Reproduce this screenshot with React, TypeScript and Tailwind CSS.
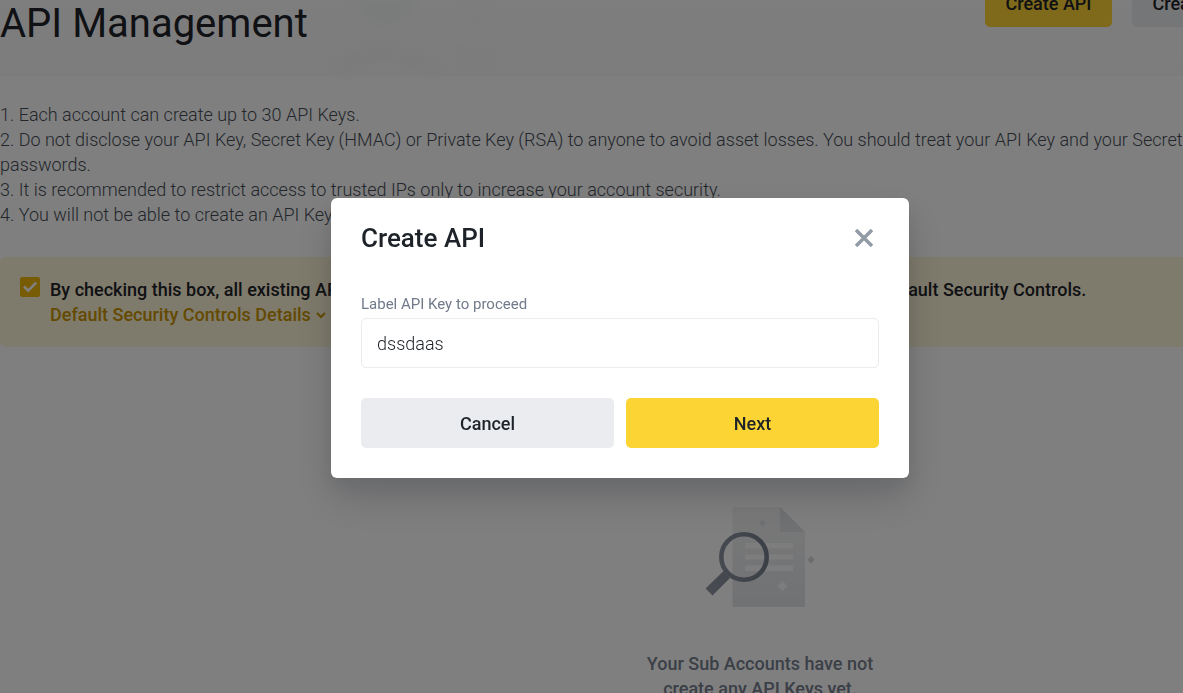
import { useState } from "react";

function ProfileBackdrop() {
  return (
    <svg
      aria-hidden="true"
      className="absolute left-[320px] top-0 h-[76px] w-[190px] blur-[4px]"
      viewBox="0 0 190 76"
      fill="none"
    >
      <ellipse cx="66" cy="2" rx="27" ry="24" fill="#f4f6f6" />
      <path d="M8 76c4-24 25-34 55-34s55 10 60 34z" fill="#f7f7f7" />
      <path d="M32 76c8-16 60-16 68 0z" fill="#f9f9f9" />
      <circle cx="153" cy="20" r="15" fill="#f9f9f9" />
      <ellipse cx="154" cy="58" rx="20" ry="9" fill="#f7f7f7" />
    </svg>
  );
}

function EmptyIllustration() {
  return (
    <svg
      aria-hidden="true"
      className="h-[104px] w-[112px]"
      viewBox="704 504 112 104"
      fill="none"
    >
      <defs>
        <linearGradient id="sheet" x1="768" y1="507" x2="768" y2="607" gradientUnits="userSpaceOnUse">
          <stop stopColor="#f3f3f3" />
          <stop offset="1" stopColor="#e1e4e8" />
        </linearGradient>
        <linearGradient id="lens" x1="706" y1="564" x2="769" y2="564" gradientUnits="userSpaceOnUse">
          <stop stopColor="#929aa5" />
          <stop offset="1" stopColor="#76808f" />
        </linearGradient>
      </defs>
      <path d="M732.5 507H780l25 25v75h-72.500z" fill="url(#sheet)" />
      <path d="M780 507l25 25h-25z" fill="#dfe2e6" />
      <path d="M745 543h48v5.500h-48zM745 554.500h48v5h-48zM745 565.500h48v5.500h-48z" fill="#fafafa" />
      <path d="M762.500 519.500l3.700 3.700-3.700 3.700-3.700-3.700z" fill="#dfe2e6" />
      <path d="M811 556l3.700 3.700-3.700 3.700-3.700-3.700z" fill="#d5d8dc" />
      <path d="M782.500 581l5 5-5 5-5-5z" fill="#fafafa" />
      <circle cx="744" cy="557" r="22.700" stroke="url(#lens)" strokeWidth="4.600" />
      <path d="M723.500 571l6.500 7-17.500 17.500-7-7z" fill="url(#lens)" />
    </svg>
  );
}

function Notes() {
  return (
    <div className="mt-[26px] text-[18px] leading-[25px] font-light text-[#474d57]">
      <p>1. Each account can create up to 30 API Keys.</p>
      <p>
        2. Do not disclose your API Key, Secret Key (HMAC) or Private Key (RSA) to anyone to avoid asset
        losses. You should treat your API Key and your Secret Key (HMAC) or Private Key (RSA) like
        <br />
        passwords.
      </p>
      <p>3. It is recommended to restrict access to trusted IPs only to increase your account security.</p>
      <p>4. You will not be able to create an API Key if KYC is not completed.</p>
    </div>
  );
}

function SecurityBanner() {
  const [checked, setChecked] = useState(true);
  return (
    <section className="mt-[30px] flex gap-[10px] rounded-md bg-[#fef6d8] p-5 text-[18px] leading-[25px] font-medium">
      <span className="relative h-5 w-5 shrink-0">
        <input
          id="default-controls"
          type="checkbox"
          checked={checked}
          onChange={(e) => setChecked(e.target.checked)}
          className="block h-5 w-5 appearance-none rounded-[2px] border border-[#f0b90b] checked:bg-[#f0b90b]"
        />
        {checked && (
          <svg aria-hidden="true" viewBox="0 0 20 20" className="pointer-events-none absolute inset-0 h-5 w-5">
            <path d="M4 9.500l4.200 4.200 8-8" fill="none" stroke="#fff" strokeWidth="2.600" />
          </svg>
        )}
      </span>
      <div>
        <label htmlFor="default-controls" className="block whitespace-nowrap text-[#1e2329]">
          By checking this box, all existing API Key(s) on your master account and subaccounts will be
          subject to Default Security Controls.
        </label>
        <button type="button" className="flex items-center gap-1 text-[#c99400]">
          Default Security Controls Details
          <svg aria-hidden="true" viewBox="0 0 12 12" className="h-3 w-3">
            <path d="M2 4l4 4 4-4" fill="none" stroke="currentColor" strokeWidth="2" />
          </svg>
        </button>
      </div>
    </section>
  );
}

function CreateDialog() {
  const [label, setLabel] = useState("dssdaas");
  return (
    <div className="fixed inset-0 flex items-start justify-center bg-black/50 pt-[198px] pl-[57px]">
      <div
        role="dialog"
        aria-modal="true"
        aria-labelledby="dialog-title"
        className="w-full max-w-[578px] rounded-md bg-white px-[30px] pt-5 pb-[30px] shadow-[0_0_1px_rgba(20,21,26,0.1),0_10px_20px_rgba(71,77,87,0.16),0_20px_40px_rgba(20,21,26,0.16)]"
      >
        <div className="flex h-10 items-center justify-between">
          <h2 id="dialog-title" className="text-[26px] leading-10 font-medium text-[#1e2329]">
            Create API
          </h2>
          <button type="button" aria-label="Close" className="flex h-[30px] w-[30px] items-center justify-center text-[#929aa5]">
            <svg aria-hidden="true" viewBox="0 0 20 20" className="h-5 w-5">
              <path d="M2 2l16 16M18 2L2 18" fill="none" stroke="currentColor" strokeWidth="3.500" />
            </svg>
          </button>
        </div>
        <label htmlFor="key-label" className="mt-9 block text-[15px] leading-5 text-[#707a8a]">
          Label API Key to proceed
        </label>
        <input
          id="key-label"
          type="text"
          value={label}
          onChange={(e) => setLabel(e.target.value)}
          className="mt-1 block h-[50px] w-full rounded-[5px] border border-[#eaecef] px-[15px] text-[18px] font-light text-[#1e2329] outline-none"
        />
        <div className="mt-[30px] grid grid-cols-2 gap-3 text-[18px] font-medium text-[#1e2329]">
          <button type="button" className="h-[50px] rounded-[5px] bg-[#eaecef]">
            Cancel
          </button>
          <button type="button" className="h-[50px] rounded-[5px] bg-[#fcd535]">
            Next
          </button>
        </div>
      </div>
    </div>
  );
}

export default function App() {
  return (
    <div className="h-screen overflow-hidden bg-white font-['Roboto','Liberation_Sans',sans-serif]">
      <main className="min-w-[1520px]">
        <header className="relative flex h-[76px] items-start justify-between bg-linear-to-b from-[#fcfcfc] to-[#f9f9f9]">
          <ProfileBackdrop />
          <h1 className="relative text-[40px] leading-[48px] text-[#1e2329]">API Management</h1>
          <div className="-mt-[21px] flex gap-5 text-[18px] font-medium whitespace-nowrap text-[#1e2329]">
            <button type="button" className="h-12 w-[127px] rounded-[5px] bg-[#fcd535]">
              Create API
            </button>
            <button type="button" className="h-12 w-[218px] rounded-[5px] bg-[#eaecef]">
              Create Tax Report API
            </button>
            <button type="button" className="h-12 w-[150px] rounded-[5px] bg-[#eaecef]">
              Delete all API
            </button>
          </div>
        </header>
        <Notes />
        <SecurityBanner />
        <section className="mt-[157px] flex flex-col items-center">
          <EmptyIllustration />
          <p className="mt-[43px] text-center text-[18px] leading-[25px] font-medium text-[#76808f]">
            Your Sub Accounts have not
            <br />
            create any API Keys yet.
          </p>
        </section>
      </main>
      <CreateDialog />
    </div>
  );
}
